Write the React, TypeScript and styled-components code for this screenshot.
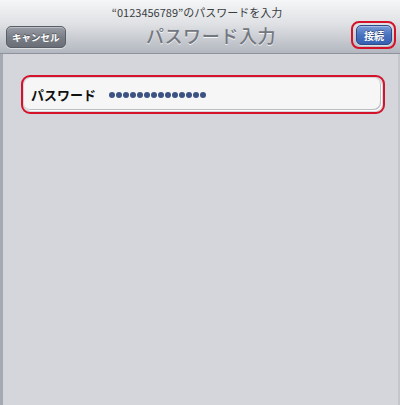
import React from 'react';
import styled, { createGlobalStyle } from 'styled-components';

const GlobalStyle = createGlobalStyle`
    html, body {
        margin: 0;
        padding: 0;
        background: #d4d6db;
    }
    body {
        font-family: "Noto Sans CJK JP", "Liberation Sans", sans-serif;
    }
`;

const Screen = styled.div`
    width: 400px;
    height: 405px;
    display: flex;
    flex-direction: column;
    overflow: hidden;
`;

const Header = styled.div`
    height: 54px;
    box-sizing: border-box;
    background: linear-gradient(#f5f6f7 0%, #dfe1e4 45%, #b3b7bf 100%);
    border-bottom: 1px solid #8e929a;
    display: flex;
    flex-direction: column;
`;

const Subtitle = styled.div`
    height: 24px;
    padding-top: 4px;
    box-sizing: border-box;
    text-align: center;
    font-size: 11px;
    line-height: 16px;
    color: #3a3d42;
    padding-right: 6px;
`;

const NavRow = styled.div`
    flex: 1;
    display: grid;
    grid-template-columns: 1fr auto 1fr;
    align-items: center;
    padding: 0 6px 4px 6px;
`;

const Title = styled.div`
    font-size: 18px;
    line-height: 20px;
    font-weight: 500;
    color: #73777f;
    text-shadow: 0 1px 0 rgba(255, 255, 255, 0.8);
    letter-spacing: 0.6px;
    padding-left: 22px;
`;

const BarButton = styled.button<{ $tone: 'grey' | 'blue' }>`
    height: ${p => p.$tone === 'blue' ? '20px' : '22px'};
    padding: 0 ${p => p.$tone === 'blue' ? '7px' : '5px'};
    border-radius: 5px;
    font-family: inherit;
    font-size: ${p => p.$tone === 'blue' ? '10px' : '9.5px'};
    font-weight: bold;
    color: #fff;
    text-shadow: 0 -1px 0 rgba(0, 0, 0, 0.4);
    border: 1px solid ${p => p.$tone === 'blue' ? '#2b4a86' : '#5a5e66'};
    background: ${p => p.$tone === 'blue'
        ? 'linear-gradient(#7a9bd6 0%, #4a72c0 50%, #3560b3 100%)'
        : 'linear-gradient(#9a9ea6 0%, #7a7e87 50%, #6a6e77 100%)'};
    box-shadow: inset 0 1px 0 rgba(255, 255, 255, 0.35), 0 1px 0 rgba(255, 255, 255, 0.5);
`;

const Highlight = styled.div`
    justify-self: end;
    border: 2px solid #d4132b;
    border-radius: 8px;
    padding: 2px 2px 2px 3px;
    margin-right: -2px;
    display: flex;
`;

const Body = styled.div`
    flex: 1;
    border-left: 3px solid #a5a9b1;
    border-right: 2px solid #c3c6cb;
    background: #d4d6db;
    padding: 21px 13px 0 18px;
`;

const FieldOutline = styled.div`
    border: 2px solid #d4132b;
    border-radius: 9px;
    padding: 1px 2px 2px 1px;
`;

const Field = styled.div`
    height: 32px;
    border-radius: 7px;
    background: #f6f6f6;
    box-shadow: inset -1px -1px 0 #bcbec2, 1px 1px 0 #ffffff;
    display: flex;
    align-items: center;
    padding: 0 0 0 7px;
`;

const Label = styled.span`
    width: 78px;
    font-size: 13px;
    font-weight: bold;
    color: #111;
`;

const Dots = styled.span`
    display: flex;
    gap: 1px;
    padding-top: 2px;
`;

const Dot = styled.span`
    width: 6px;
    height: 6px;
    border-radius: 50%;
    background: #3c5283;
`;

export default function App() {
    return (
        <Screen>
            <GlobalStyle />
            <Header>
                <Subtitle>“0123456789”のパスワードを入力</Subtitle>
                <NavRow>
                    <div><BarButton $tone="grey">キャンセル</BarButton></div>
                    <Title>パスワード入力</Title>
                    <Highlight><BarButton $tone="blue">接続</BarButton></Highlight>
                </NavRow>
            </Header>
            <Body>
                <FieldOutline>
                    <Field>
                        <Label>パスワード</Label>
                        <Dots>
                            {Array.from({ length: 14 }).map((_, i) => <Dot key={i} />)}
                        </Dots>
                    </Field>
                </FieldOutline>
            </Body>
        </Screen>
    );
}
